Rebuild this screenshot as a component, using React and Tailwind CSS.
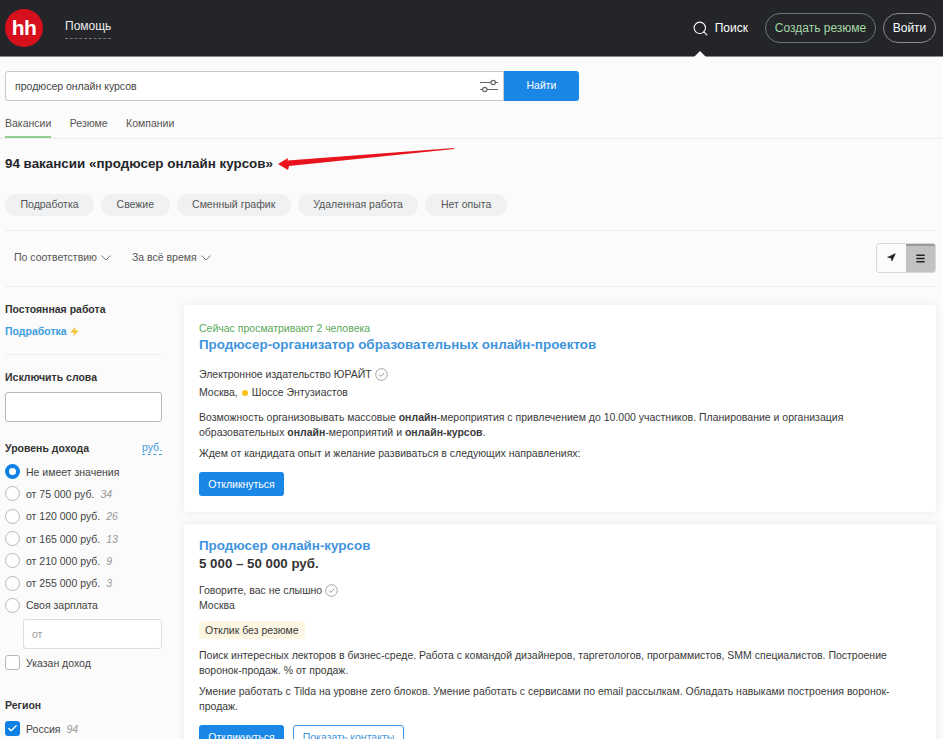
import React from 'react';
import { Search, Check, Navigation, Menu, Zap } from 'lucide-react';

function Verified() {
  return (
    <svg width="13" height="13" viewBox="0 0 13 13" fill="none" className="shrink-0">
      <circle cx="6.5" cy="6.5" r="5.8" stroke="#9a9a9a" strokeWidth="0.9" />
      <path d="M4 6.6l1.8 1.8 3.4-3.6" stroke="#8a8a8a" strokeWidth="0.9" />
    </svg>
  );
}

function Chevron() {
  return (
    <svg width="10" height="6" viewBox="0 0 10 6" fill="none" stroke="#666" strokeWidth="0.9" className="shrink-0">
      <path d="M0.5 0.5L5 5l4.5-4.5" />
    </svg>
  );
}

function Radio({ label, count, checked }) {
  return (
    <div className="flex items-center h-[22.3px]">
      {checked ? (
        <span className="w-[15px] h-[15px] rounded-full border-[4px] border-[#0f80e4] bg-white shrink-0" />
      ) : (
        <span className="w-[15px] h-[15px] rounded-full border border-[#b8b8b8] bg-white shrink-0" />
      )}
      <span className="ml-[6px] text-[#444]">{label}</span>
      {count && <span className="ml-[6px] italic text-[#999]">{count}</span>}
    </div>
  );
}

function Box({ label, count, checked }) {
  return (
    <div className="flex items-center h-[22px]">
      {checked ? (
        <span className="w-[15px] h-[15px] rounded-[3px] bg-[#0f80e4] flex items-center justify-center shrink-0">
          <Check className="w-[11px] h-[11px] text-white" strokeWidth={3} />
        </span>
      ) : (
        <span className="w-[15px] h-[15px] rounded-[3px] border border-[#b8b8b8] bg-white shrink-0" />
      )}
      <span className="ml-[6px] text-[#444]">{label}</span>
      {count && <span className="ml-[6px] italic text-[#999]">{count}</span>}
    </div>
  );
}

function Sidebar() {
  return (
    <aside className="w-[157px] shrink-0 text-[10.5px] leading-[14px]">
      <div className="font-bold text-[#333] mt-[15px]">Постоянная работа</div>
      <div className="mt-[8px] flex items-center font-bold text-[#3c9de0]">
        Подработка <Zap className="w-[9px] h-[9px] ml-[3px] text-[#f5c33b] fill-[#f5c33b]" />
      </div>
      <div className="border-t border-[#eeeeee] mt-[16px]" />
      <div className="font-bold text-[#333] mt-[15px]">Исключить слова</div>
      <div className="h-[30px] mt-[8px] rounded-[3px] border border-[#b8b8b8] bg-white" />
      <div className="flex justify-between items-center mt-[18px] mb-[5.5px]">
        <span className="font-bold text-[#333]">Уровень дохода</span>
        <span className="text-[#3c9de0] border-b border-dashed border-[#3c9de0]">руб.</span>
      </div>
      <Radio label="Не имеет значения" checked />
      <Radio label="от 75 000 руб." count="34" />
      <Radio label="от 120 000 руб." count="26" />
      <Radio label="от 165 000 руб." count="13" />
      <Radio label="от 210 000 руб." count="9" />
      <Radio label="от 255 000 руб." count="3" />
      <Radio label="Своя зарплата" />
      <div className="ml-[18px] mt-[2px] h-[30px] rounded-[3px] border border-[#dddddd] bg-white flex items-center pl-[8px] text-[#999]">от</div>
      <div className="mt-[3px]"><Box label="Указан доход" /></div>
      <div className="font-bold text-[#333] mt-[24px] mb-[6px]">Регион</div>
      <Box label="Россия" count="94" checked />
    </aside>
  );
}

function Vacancies() {
  return (
    <main className="flex-1 min-w-0 flex flex-col gap-[12px] text-[10.5px] leading-[15px] text-[#3a3a3a]">
      <article className="bg-white rounded-[4px] shadow-[0_0_8px_rgba(0,0,0,0.07)] px-[15px] pt-[16px] pb-[16px] h-[207px]">
        <div className="text-[#5aa95a]">Сейчас просматривают 2 человека</div>
        <h2 className="text-[13.4px] leading-[18px] font-bold text-[#3f94dc]">Продюсер-организатор образовательных онлайн-проектов</h2>
        <div className="flex items-center gap-[3px] mt-[13px]">Электронное издательство ЮРАЙТ <Verified /></div>
        <div className="flex items-center mt-[3px]">
          Москва, <span className="w-[6px] h-[6px] rounded-full bg-[#f9c21a] mx-[4px]" /> Шоссе Энтузиастов
        </div>
        <p className="mt-[10px]">
          Возможность организовывать массовые <b>онлайн</b>-мероприятия с привлечением до 10.000 участников. Планирование и организация образовательных <b>онлайн</b>-мероприятий и <b>онлайн-курсов</b>.
        </p>
        <p className="mt-[6px]">Ждем от кандидата опыт и желание развиваться в следующих направлениях:</p>
        <button className="mt-[11px] h-[24px] w-[85px] rounded-[3px] bg-[#1a86e5] text-white">Откликнуться</button>
      </article>
      <article className="bg-white rounded-[4px] shadow-[0_0_8px_rgba(0,0,0,0.07)] px-[15px] pt-[13px] pb-[16px]">
        <h2 className="text-[13.4px] leading-[18px] font-bold text-[#3f94dc]">Продюсер онлайн-курсов</h2>
        <div className="text-[13.3px] leading-[18px] font-bold text-[#333]">5 000 – 50 000 руб.</div>
        <div className="flex items-center gap-[3px] mt-[10px]">Говорите, вас не слышно <Verified /></div>
        <div>Москва</div>
        <span className="inline-block mt-[8px] h-[18px] leading-[18px] px-[6px] rounded-[3px] bg-[#fdf6e3]">Отклик без резюме</span>
        <p className="mt-[9px]">
          Поиск интересных лекторов в бизнес-среде. Работа с командой дизайнеров, таргетологов, программистов, SMM специалистов. Построение воронок-продаж. % от продаж.
        </p>
        <p className="mt-[6px]">
          Умение работать с Tilda на уровне zero блоков. Умение работать с сервисами по email рассылкам. Обладать навыками построения воронок-продаж.
        </p>
        <div className="flex gap-[9px] mt-[11px]">
          <button className="h-[24px] w-[85px] rounded-[3px] bg-[#1a86e5] text-white">Откликнуться</button>
          <button className="h-[24px] w-[111px] rounded-[3px] border border-[#3f94dc] text-[#3f94dc]">Показать контакты</button>
        </div>
      </article>
    </main>
  );
}

export default function App() {
  const chips = ['Подработка', 'Свежие', 'Сменный график', 'Удаленная работа', 'Нет опыта'];
  return (
    <div className="h-[739px] overflow-hidden bg-[#fbfbfb] font-['Liberation_Sans',Arial,sans-serif] relative">
      <header className="h-[57px] bg-[#232529] border-b border-[#8a8a8a] flex items-center px-[5px] relative">
        <div className="w-[38px] h-[38px] rounded-full bg-[#d6101d] flex items-center justify-center text-white font-bold text-[21px] tracking-[-0.5px] mb-[1px]">hh</div>
        <div className="ml-[22px] text-[12px] text-[#eeeeee] pb-[3px] border-b border-dashed border-[#777] leading-[18px]">Помощь</div>
        <div className="ml-auto mr-[1px] flex items-center">
          <Search className="w-[17px] h-[17px] text-white" strokeWidth={1.5} />
          <span className="ml-[6px] text-[12px] text-white">Поиск</span>
          <div className="ml-[17px] w-[111px] h-[30px] rounded-full border border-[#6e7670] text-[12px] text-[#a5d6a5] flex items-center justify-center">Создать резюме</div>
          <div className="ml-[7px] mr-[1px] w-[53px] h-[30px] rounded-full border border-[#8a8a8a] text-[12px] text-white flex items-center justify-center">Войти</div>
        </div>
        <span className="absolute left-[694px] bottom-[-1px] w-0 h-0 border-x-[6px] border-x-transparent border-b-[6px] border-b-[#fbfbfb]" />
      </header>

      <div className="px-[5px]">
        <div className="flex mt-[14px] h-[30px] w-[574px]">
          <div className="flex-1 bg-white border border-[#c8c8c8] rounded-l-[3px] flex items-center pl-[9px] text-[10.5px] text-[#444]">
            <span className="pt-[1px]">продюсер онлайн курсов</span>
            <svg width="20" height="18" viewBox="0 0 20 18" fill="none" className="ml-auto mr-[4px]" stroke="#666" strokeWidth="1.2">
              <path d="M1 5.5h11M16.5 5.5H19M1 12.5h2.5M8 12.5h11" />
              <circle cx="14.2" cy="5.5" r="2.2" />
              <circle cx="5.8" cy="12.5" r="2.2" />
            </svg>
          </div>
          <button className="w-[75px] bg-[#1a86e5] text-white text-[10.5px] rounded-r-[3px]">Найти</button>
        </div>
        <nav className="flex gap-[18.5px] mt-[15px] text-[10.5px] text-[#555] leading-[14px]">
          <span className="border-b-2 border-[#8fce8f] h-[22px]">Вакансии</span>
          <span>Резюме</span>
          <span>Компании</span>
        </nav>
      </div>
      <div className="border-t border-[#eeeeee]" />

      <div className="pl-[5px] pr-[7px]">
        <h1 className="mt-[16px] text-[13.4px] leading-[18px] font-bold text-[#232529]">94 вакансии «продюсер онлайн курсов»</h1>
        <div className="flex gap-[7px] mt-[21px]">
          {chips.map(c => (
            <span key={c} className="h-[22px] px-[15.5px] rounded-full bg-[#eff1f2] text-[10.5px] text-[#555] flex items-center">{c}</span>
          ))}
        </div>
        <div className="border-t border-[#eeeeee] mt-[14px]" />
        <div className="h-[56px] pb-[2px] flex items-center pl-[9px] text-[10.5px] text-[#555] border-b border-[#eeeeee]">
          <span className="flex items-center gap-[4px]">По соответствию <Chevron /></span>
          <span className="flex items-center gap-[4px] ml-[21px]">За всё время <Chevron /></span>
          <div className="ml-auto flex h-[30px] rounded-[3px] border border-[#d8d8d8] overflow-hidden">
            <span className="w-[29px] bg-[#fbfbfb] flex items-center justify-center">
              <Navigation className="w-[9px] h-[9px] text-[#222] fill-[#222]" />
            </span>
            <span className="w-[29px] bg-[#c2c2c2] border-t-2 border-[#9a9a9a] flex items-center justify-center">
              <Menu className="w-[11px] h-[11px] text-[#222]" strokeWidth={3} />
            </span>
          </div>
        </div>
        <div className="flex gap-[22px]">
          <Sidebar />
          <div className="flex-1 min-w-0 pt-[18px]"><Vacancies /></div>
        </div>
      </div>

      <svg width="190" height="28" viewBox="0 0 190 28" className="absolute left-[275px] top-[146px] pointer-events-none">
        <path d="M3 18L13 12L12.5 14.5L179 2L179 3L14 20L13 24Z" fill="#e8131c" />
      </svg>
    </div>
  );
}
